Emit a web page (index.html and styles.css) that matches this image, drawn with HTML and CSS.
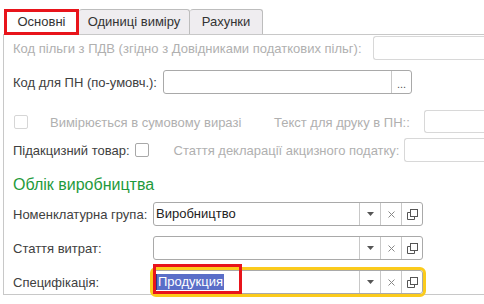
FILE: index.html
```html
<!DOCTYPE html>
<html lang="uk">
  <head>
    <meta charset="UTF-8" />
    <title>Номенклатура</title>
    <link rel="stylesheet" href="styles.css">
  </head>
  <body>
    <div class="tabs">
      <div class="tab active">Основні</div>
      <div class="tab">Одиниці виміру</div>
      <div class="tab">Рахунки</div>
      <div class="mark mark-tab"></div>
    </div>

    <div class="panel">
      <div class="row row1">
        <span class="label muted w-pdv">Код пільги з ПДВ (згідно з Довідниками податкових пільг):</span>
        <div class="field disabled wide"></div>
      </div>

      <div class="row row2">
        <span class="label w-pn">Код для ПН (по-умовч.):</span>
        <div class="field pn">
          <div class="field-text"></div>
          <div class="btn dots">...</div>
        </div>
      </div>

      <div class="row row3">
        <span class="check disabled"></span>
        <span class="label muted w-sum">Вимірюється в сумовому виразі</span>
        <span class="label muted w-print">Текст для друку в ПН::</span>
        <div class="field disabled wide"></div>
      </div>

      <div class="row row4">
        <span class="label">Підакцизний товар:</span>
        <span class="check"></span>
        <span class="label muted w-excise">Стаття декларації акцизного податку:</span>
        <div class="field disabled wide"></div>
      </div>

      <h2 class="section">Облік виробництва</h2>

      <div class="row row5">
        <span class="label w-prod">Номенклатурна група:</span>
        <div class="field prod">
          <div class="field-text">Виробництво</div>
          <div class="btn"><svg width="7" height="4" viewBox="0 0 7 4"><path d="M0 0h7L3.5 4z" fill="#555"/></svg></div>
          <div class="btn"><svg width="7" height="7" viewBox="0 0 7 7"><path d="M0.5 0.5l6 6M6.5 0.5l-6 6" stroke="#888" stroke-width="1"/></svg></div>
          <div class="btn"><svg width="11" height="11" viewBox="0 0 11 11"><path d="M3.5 3.5H0.5V10.5H7.5V7.5" fill="none" stroke="#555"/><rect x="3.5" y="0.5" width="7" height="7" fill="none" stroke="#555"/></svg></div>
        </div>
      </div>

      <div class="row row6">
        <span class="label w-prod">Стаття витрат:</span>
        <div class="field prod">
          <div class="field-text"></div>
          <div class="btn"><svg width="7" height="4" viewBox="0 0 7 4"><path d="M0 0h7L3.5 4z" fill="#555"/></svg></div>
          <div class="btn"><svg width="7" height="7" viewBox="0 0 7 7"><path d="M0.5 0.5l6 6M6.5 0.5l-6 6" stroke="#888" stroke-width="1"/></svg></div>
          <div class="btn"><svg width="11" height="11" viewBox="0 0 11 11"><path d="M3.5 3.5H0.5V10.5H7.5V7.5" fill="none" stroke="#555"/><rect x="3.5" y="0.5" width="7" height="7" fill="none" stroke="#555"/></svg></div>
        </div>
      </div>

      <div class="row row7">
        <span class="label w-prod">Специфікація:</span>
        <div class="field prod focused">
          <div class="field-text"><span class="selected">Продукция</span></div>
          <div class="btn"><svg width="7" height="4" viewBox="0 0 7 4"><path d="M0 0h7L3.5 4z" fill="#555"/></svg></div>
          <div class="btn"><svg width="7" height="7" viewBox="0 0 7 7"><path d="M0.5 0.5l6 6M6.5 0.5l-6 6" stroke="#888" stroke-width="1"/></svg></div>
          <div class="btn"><svg width="11" height="11" viewBox="0 0 11 11"><path d="M3.5 3.5H0.5V10.5H7.5V7.5" fill="none" stroke="#555"/><rect x="3.5" y="0.5" width="7" height="7" fill="none" stroke="#555"/></svg></div>
          <div class="mark mark-value"></div>
        </div>
      </div>
    </div>
  </body>
</html>
```

FILE: styles.css
```css
* {
  margin: 0;
  padding: 0;
  box-sizing: border-box;
}

body {
  width: 484px;
  height: 304px;
  overflow: hidden;
  background: #fff;
  font-family: "Liberation Sans", Arial, sans-serif;
  font-size: 13px;
  color: #404040;
}

.tabs {
  position: relative;
  display: flex;
  padding: 9px 0 0 4px;
  height: 34px;
}

.tab {
  height: 25px;
  line-height: 24px;
  text-align: center;
  white-space: nowrap;
  border: 1px solid #bdbdbd;
  border-bottom: none;
  border-left: none;
  border-radius: 3px 3px 0 0;
  background: #efedf0;
  color: #333;
}

.tab.active {
  width: 75px;
  background: #fff;
  border-left: 1px solid #bdbdbd;
}

.tab:nth-child(2) { width: 111px; }
.tab:nth-child(3) { width: 73px; }

.mark {
  position: absolute;
  border: 3px solid #e8141b;
  pointer-events: none;
}

.mark-tab {
  left: 4px;
  top: 9px;
  width: 75px;
  height: 26px;
}

.panel {
  margin-left: 3px;
  width: 481px;
  height: 261px;
  border-left: 1px solid #c8c8c8;
  border-top: 1px solid #c8c8c8;
  border-bottom: 1px solid #c8c8c8;
  padding-left: 9px;
}

.row {
  display: flex;
  align-items: center;
  height: 24px;
  white-space: nowrap;
}

.row1 { margin-top: 1px; }
.row2 { margin-top: 10px; }
.row3 { margin-top: 16px; }
.row4 { margin-top: 4px; }
.row5 { margin-top: 7px; }
.row6 { margin-top: 10px; }
.row7 { margin-top: 10px; }

.label {
  flex: none;
}

.muted {
  color: #b0b0b0;
}

.w-pdv { width: 360px; }
.w-pn { width: 150px; }
.w-sum { width: 224px; margin-left: 22px; }
.w-print { width: 150px; }
.w-excise { width: 230px; margin-left: 25px; }
.w-prod { width: 140px; }

.check {
  flex: none;
  width: 14px;
  height: 14px;
  border: 1px solid #a8a8a8;
  border-radius: 2px;
  margin-left: 5px;
}

.check.disabled {
  border-color: #d6d6d6;
  margin-left: 1px;
}

.field {
  position: relative;
  flex: none;
  display: flex;
  height: 24px;
  border: 1px solid #a9a9a9;
  border-radius: 3px;
  background: #fff;
}

.field.disabled {
  border-color: #d8d8d8;
}

/* fields cut by the right edge of the window */
.wide {
  flex: 1;
  min-width: 0;
  border-right: none;
  border-radius: 3px 0 0 3px;
}

.row3 .wide { height: 23px; margin-top: -1px; }

.field-text {
  flex: 1;
  padding-left: 2px;
  line-height: 22px;
  color: #222;
}

.pn { width: 249px; }

.btn {
  width: 21px;
  display: flex;
  align-items: center;
  justify-content: center;
  border-left: 1px solid #c8c8c8;
}

.dots {
  width: 20px;
  color: #555;
  font-size: 11px;
  padding-top: 3px;
}

.prod { width: 270px; }

.focused {
  outline: 3px solid #fbcb1c;
  outline-offset: 0;
}

.selected {
  display: inline-block;
  background: #5a6ec8;
  color: #fff;
  line-height: 16px;
  padding: 0 1px;
  border-left: 1px solid #2a3a80;
}

.mark-value {
  left: -1px;
  top: -7px;
  width: 89px;
  height: 30px;
}

.section {
  margin-top: 13px;
  height: 20px;
  font-size: 16px;
  font-weight: normal;
  color: #1f9a3c;
  line-height: 20px;
}
```
